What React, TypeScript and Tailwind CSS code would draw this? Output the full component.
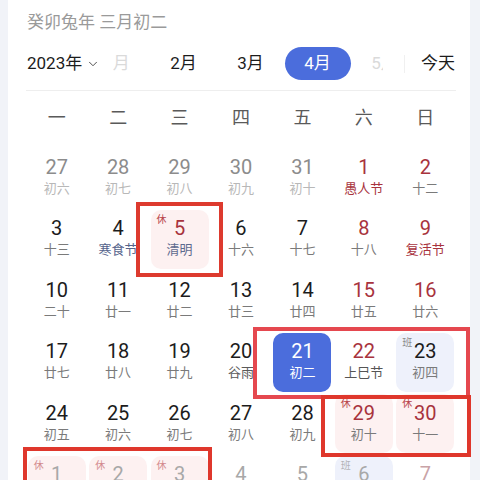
import React from 'react';
import { ChevronDown } from 'lucide-react';

type Day = {
  n: number;
  lunar: string;
  kind?: 'prev' | 'next';
  red?: boolean;
  labelColor?: string;
  tag?: '休' | '班';
  selected?: boolean;
};

const weeks: Day[][] = [
  [
    { n: 27, lunar: '初六', kind: 'prev' },
    { n: 28, lunar: '初七', kind: 'prev' },
    { n: 29, lunar: '初八', kind: 'prev' },
    { n: 30, lunar: '初九', kind: 'prev' },
    { n: 31, lunar: '初十', kind: 'prev' },
    { n: 1, lunar: '愚人节', red: true, labelColor: 'text-[#a8333d]' },
    { n: 2, lunar: '十二', red: true },
  ],
  [
    { n: 3, lunar: '十三' },
    { n: 4, lunar: '寒食节', labelColor: 'text-[#55648c]' },
    { n: 5, lunar: '清明', red: true, tag: '休', labelColor: 'text-[#5d6a8e]' },
    { n: 6, lunar: '十六' },
    { n: 7, lunar: '十七' },
    { n: 8, lunar: '十八', red: true },
    { n: 9, lunar: '复活节', red: true, labelColor: 'text-[#a8333d]' },
  ],
  [
    { n: 10, lunar: '二十' },
    { n: 11, lunar: '廿一' },
    { n: 12, lunar: '廿二' },
    { n: 13, lunar: '廿三' },
    { n: 14, lunar: '廿四' },
    { n: 15, lunar: '廿五', red: true },
    { n: 16, lunar: '廿六', red: true },
  ],
  [
    { n: 17, lunar: '廿七' },
    { n: 18, lunar: '廿八' },
    { n: 19, lunar: '廿九' },
    { n: 20, lunar: '谷雨', labelColor: 'text-[#5a5a5a]' },
    { n: 21, lunar: '初二', selected: true },
    { n: 22, lunar: '上巳节', red: true, labelColor: 'text-[#555]' },
    { n: 23, lunar: '初四', tag: '班' },
  ],
  [
    { n: 24, lunar: '初五' },
    { n: 25, lunar: '初六' },
    { n: 26, lunar: '初七' },
    { n: 27, lunar: '初八' },
    { n: 28, lunar: '初九' },
    { n: 29, lunar: '初十', red: true, tag: '休' },
    { n: 30, lunar: '十一', red: true, tag: '休' },
  ],
  [
    { n: 1, lunar: '十二', kind: 'next', tag: '休' },
    { n: 2, lunar: '十三', kind: 'next', tag: '休' },
    { n: 3, lunar: '十四', kind: 'next', tag: '休' },
    { n: 4, lunar: '青年节', kind: 'next' },
    { n: 5, lunar: '立夏', kind: 'next' },
    { n: 6, lunar: '十七', kind: 'next', tag: '班' },
    { n: 7, lunar: '十八', kind: 'next', red: true },
  ],
];

const DayCell: React.FC<{ d: Day }> = ({ d }) => {
  let box = 'bg-transparent';
  if (d.selected) box = 'bg-[#4b6ddc]';
  else if (d.tag === '休') box = 'bg-[#fdf1f1]';
  else if (d.tag === '班') box = 'bg-[#eef1fb]';

  let num = 'text-[#1c1c1c]';
  let lunar = 'text-[#7a7a7a]';
  if (d.kind === 'prev') {
    num = 'text-[#8c8c8c]';
    lunar = 'text-[#b8b8b8]';
  } else if (d.kind === 'next') {
    num = d.red ? 'text-[#c9a3a7]' : 'text-[#a8a8a8]';
    lunar = 'text-[#c4c4c4]';
  } else if (d.red) {
    num = 'text-[#a8333d]';
  }
  if (d.selected) {
    num = 'text-white';
    lunar = 'text-white';
  } else if (d.labelColor && d.kind !== 'prev') {
    lunar = d.labelColor;
  }

  return (
    <div className="h-[61.5px] flex items-center justify-center">
      <div className={`relative w-[58px] h-[59px] rounded-[10px] flex flex-col items-center justify-center ${box}`}>
        {d.tag && (
          <span
            className={`absolute left-[6px] top-[4px] text-[10px] leading-[12px] ${
              d.tag === '休' ? 'text-[#b8454c]' : 'text-[#8a8a8a]'
            } ${d.kind === 'next' ? 'opacity-60' : ''}`}
          >
            {d.tag}
          </span>
        )}
        <span className={`text-[20px] leading-[22px] ${num}`}>{d.n}</span>
        <span className={`text-[13px] leading-[22px] ${lunar}`}>{d.lunar}</span>
      </div>
    </div>
  );
};

export default function App() {
  const months = ['1月', '2月', '3月', '4月', '5月'];

  return (
    <div className="relative w-[480px] h-[480px] overflow-hidden bg-[#f1f3f8] font-['Roboto','Noto_Sans_CJK_SC',sans-serif]">
      <div className="ml-[8px] w-[462px] h-full bg-white pl-[18px] pr-[14px]">
        {/* Lunar date */}
        <div className="pt-[10px] text-[17px] leading-[24px] text-[#9a9a9a] pl-[1px]">癸卯兔年 三月初二</div>

        {/* Year + month tabs */}
        <div className="mt-[13px] flex items-center h-[33px] whitespace-nowrap">
          <div className="w-[87px] shrink-0 flex items-center text-[17px] text-[#1c1c1c] pl-[1px]">
            2023年
            <ChevronDown className="ml-[4px] w-[14px] h-[14px] text-[#444]" strokeWidth={1.6} />
          </div>
          <div className="w-[270px] shrink-0 h-[33px] overflow-hidden">
            <div className="flex -ml-[30px]">
              {months.map((m, i) => (
                <div key={m} className="w-[67px] shrink-0 flex justify-center">
                  <div
                    className={`w-[66px] h-[33px] rounded-full flex items-center justify-center text-[17px] ${
                      i === 3
                        ? 'bg-[#4b6ddc] text-white'
                        : i === 0 || i === 4
                        ? 'text-[#dadada]'
                        : 'text-[#1c1c1c]'
                    }`}
                  >
                    {m}
                  </div>
                </div>
              ))}
            </div>
          </div>
          <div className="w-[21px] shrink-0" />
          <div className="w-px h-[18px] shrink-0 bg-[#f0f0f0]" />
          <div className="ml-[16px] shrink-0 text-[17px] text-[#1c1c1c]">今天</div>
        </div>
        <div className="mt-[10px] h-px bg-[#eeeeee]" />

        {/* Weekdays */}
        <div className="grid grid-cols-7 w-[430px] h-[52px] items-center">
          {['一', '二', '三', '四', '五', '六', '日'].map((w) => (
            <div key={w} className="text-center text-[18px] text-[#5a5a5a]">
              {w}
            </div>
          ))}
        </div>

        {/* Days */}
        <div className="pt-[4px] grid grid-cols-7 w-[430px]">
          {weeks.flat().map((d, i) => (
            <DayCell key={i} d={d} />
          ))}
        </div>
      </div>

      {/* Red annotation boxes */}
      <div className="absolute left-[136px] top-[202px] w-[87px] h-[75px] border-4 border-[#dd3a2e]" />
      <div className="absolute left-[253px] top-[327px] w-[217px] h-[72px] border-4 border-[#e5484f]" />
      <div className="absolute left-[321px] top-[395px] w-[150px] h-[62px] border-4 border-[#df372c]" />
      <div className="absolute left-[23px] top-[447px] w-[189px] h-[60px] border-4 border-[#df372c]" />
    </div>
  );
}
